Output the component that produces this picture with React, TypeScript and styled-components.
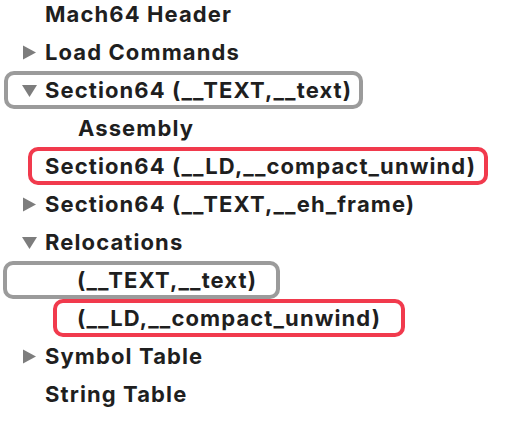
import React from "react";
import styled, { createGlobalStyle } from "styled-components";

const Global = createGlobalStyle`
  html, body { margin: 0; padding: 0; background: #ffffff; }
  body { width: 522px; height: 424px; overflow: hidden; }
`;

const Tree = styled.ul`
  list-style: none;
  margin: -5px 0 0;
  padding: 0;
  font-family: Inter, "Noto Sans", "Liberation Sans", sans-serif;
  font-weight: 700;
  font-size: 22px;
  color: #1f1f1f;
  letter-spacing: 1.1px;
`;

const Row = styled.li<{ $indent: number }>`
  height: 38px;
  display: flex;
  align-items: center;
  padding-left: ${(p) => p.$indent}px;
  white-space: nowrap;
`;

const Outline = styled.span<{ $tone: "gray" | "red"; $width: number; $pad: number }>`
  box-sizing: border-box;
  display: flex;
  align-items: center;
  height: 38px;
  width: ${(p) => p.$width}px;
  padding-left: ${(p) => p.$pad}px;
  border: 4px solid ${(p) => (p.$tone === "gray" ? "#9b9b9b" : "#f13a4d")};
  border-radius: 10px;
`;

const Label = styled.span`
  line-height: 1;
`;

const Toggle = styled.svg`
  flex: none;
  width: 15px;
  height: 15px;
  margin-right: 8px;
  fill: #7d7d7d;
`;

const Disclosure: React.FC<{ open?: boolean }> = ({ open }) => (
  <Toggle viewBox="0 0 15 15">
    {open ? <polygon points="0,2 15,2 7.5,14" /> : <polygon points="1,0.5 14,7.5 1,14.5" />}
  </Toggle>
);

export default function App() {
  return (
    <>
      <Global />
      <Tree>
        <Row $indent={45}>
          <Label>Mach64 Header</Label>
        </Row>
        <Row $indent={22}>
          <Disclosure />
          <Label>Load Commands</Label>
        </Row>
        <Row $indent={4}>
          <Outline $tone="gray" $width={359} $pad={14}>
            <Disclosure open />
            <Label>Section64 (__TEXT,__text)</Label>
          </Outline>
        </Row>
        <Row $indent={78}>
          <Label>Assembly</Label>
        </Row>
        <Row $indent={28}>
          <Outline $tone="red" $width={460} $pad={13}>
            <Label>Section64 (__LD,__compact_unwind)</Label>
          </Outline>
        </Row>
        <Row $indent={22}>
          <Disclosure />
          <Label>Section64 (__TEXT,__eh_frame)</Label>
        </Row>
        <Row $indent={22}>
          <Disclosure open />
          <Label>Relocations</Label>
        </Row>
        <Row $indent={3}>
          <Outline $tone="gray" $width={277} $pad={70}>
            <Label>(__TEXT,__text)</Label>
          </Outline>
        </Row>
        <Row $indent={53}>
          <Outline $tone="red" $width={352} $pad={20}>
            <Label>(__LD,__compact_unwind)</Label>
          </Outline>
        </Row>
        <Row $indent={22}>
          <Disclosure />
          <Label>Symbol Table</Label>
        </Row>
        <Row $indent={45}>
          <Label>String Table</Label>
        </Row>
      </Tree>
    </>
  );
}
